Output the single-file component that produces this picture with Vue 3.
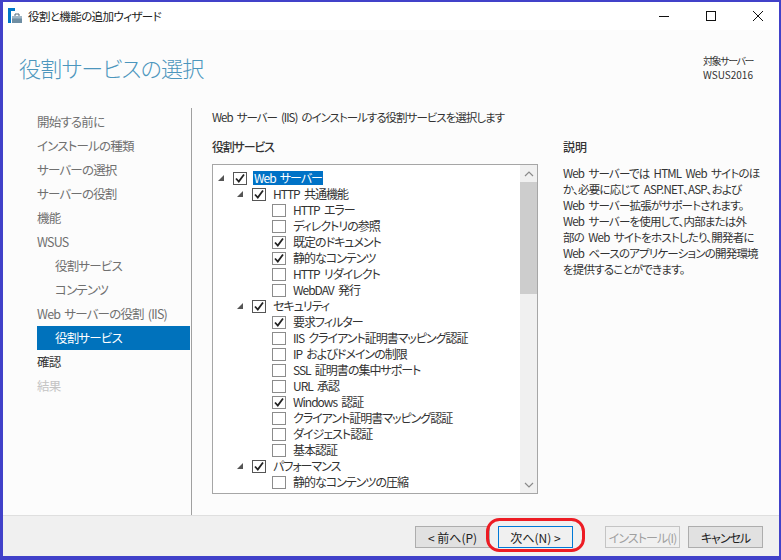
<script setup>
const nav = [
  { t: '開始する前に', c: 'gray' },
  { t: 'インストールの種類', c: 'gray' },
  { t: 'サーバーの選択', c: 'gray' },
  { t: 'サーバーの役割', c: 'gray' },
  { t: '機能', c: 'gray' },
  { t: 'WSUS', c: 'gray' },
  { t: '役割サービス', c: 'gray', sub: true },
  { t: 'コンテンツ', c: 'gray', sub: true },
  { t: 'Web サーバーの役割 (IIS)', c: 'gray' },
  { t: '役割サービス', c: 'sel', sub: true },
  { t: '確認', c: 'dark' },
  { t: '結果', c: 'off' }
]
const tree = [
  { t: 'Web サーバー', l: 0, ch: true, exp: true, sel: true },
  { t: 'HTTP 共通機能', l: 1, ch: true, exp: true },
  { t: 'HTTP エラー', l: 2 },
  { t: 'ディレクトリの参照', l: 2 },
  { t: '既定のドキュメント', l: 2, ch: true },
  { t: '静的なコンテンツ', l: 2, ch: true },
  { t: 'HTTP リダイレクト', l: 2 },
  { t: 'WebDAV 発行', l: 2 },
  { t: 'セキュリティ', l: 1, ch: true, exp: true },
  { t: '要求フィルター', l: 2, ch: true },
  { t: 'IIS クライアント証明書マッピング認証', l: 2 },
  { t: 'IP およびドメインの制限', l: 2 },
  { t: 'SSL 証明書の集中サポート', l: 2 },
  { t: 'URL 承認', l: 2 },
  { t: 'Windows 認証', l: 2, ch: true },
  { t: 'クライアント証明書マッピング認証', l: 2 },
  { t: 'ダイジェスト認証', l: 2 },
  { t: '基本認証', l: 2 },
  { t: 'パフォーマンス', l: 1, ch: true, exp: true },
  { t: '静的なコンテンツの圧縮', l: 2 }
]
const descLines = [
  'Web サーバーでは HTML Web サイトのほ',
  'か、必要に応じて ASP.NET、ASP、および',
  'Web サーバー拡張がサポートされます。',
  'Web サーバーを使用して、内部または外',
  '部の Web サイトをホストしたり、開発者に',
  'Web ベースのアプリケーションの開発環境',
  'を提供することができます。'
]
</script>

<template>
  <div class="win">
    <div class="titlebar">
      <svg class="appicon" width="16" height="16" viewBox="0 0 16 16">
        <rect x="0" y="0" width="7" height="3" fill="#0078c8" />
        <rect x="0" y="3" width="3" height="12" fill="#0078c8" />
        <path d="M4 8h10v7H4z" fill="#6f8ea3" />
        <path d="M4 8h10v2.5H4z" fill="#9fb6c6" />
        <path d="M7 8V6h4v2" fill="none" stroke="#51697a" stroke-width="1" />
      </svg>
      <span class="wintitle">役割と機能の追加ウィザード</span>
      <div class="controls">
        <svg width="12" height="12" viewBox="0 0 12 12"><path d="M1 6.5h10" stroke="#111" stroke-width="1" /></svg>
        <svg width="12" height="12" viewBox="0 0 12 12"><rect x="1.5" y="1.5" width="9" height="9" fill="none" stroke="#111" /></svg>
        <svg width="12" height="12" viewBox="0 0 12 12"><path d="M1 1l10 10M11 1L1 11" stroke="#111" stroke-width="1" /></svg>
      </div>
    </div>

    <div class="main">
      <header class="head">
        <h1>役割サービスの選択</h1>
        <div class="target">
          <div class="tight">対象サーバー</div>
          <div>WSUS2016</div>
        </div>
      </header>

      <div class="body">
        <nav class="nav">
          <div
            v-for="(n, i) in nav"
            :key="i"
            class="navitem"
            :class="[n.c, { sub: n.sub }]"
          >{{ n.t }}</div>
        </nav>

        <section class="content">
          <p class="lead">Web サーバー (IIS) のインストールする役割サービスを選択します</p>
          <div class="cols">
            <div class="left">
              <div class="label">役割サービス</div>
              <div class="treebox">
                <div class="rows">
                  <div
                    v-for="(r, i) in tree"
                    :key="i"
                    class="row"
                    :class="'lv' + r.l"
                  >
                    <span class="arrow" :class="{ hidden: !r.exp }"></span>
                    <span class="cb">
                      <svg v-if="r.ch" width="12" height="11" viewBox="0 0 12 11">
                        <path d="M2 5.5l2.8 3L10 1.5" fill="none" stroke="#222" stroke-width="1.8" />
                      </svg>
                    </span>
                    <span class="rowtext" :class="{ selected: r.sel }">{{ r.t }}</span>
                  </div>
                </div>
                <div class="scroll">
                  <div class="sbtn">
                    <svg width="10" height="6" viewBox="0 0 10 6"><path d="M1 5l4-4 4 4" fill="none" stroke="#8a8a8a" stroke-width="1.2" /></svg>
                  </div>
                  <div class="thumb"></div>
                  <div class="track"></div>
                  <div class="sbtn">
                    <svg width="10" height="6" viewBox="0 0 10 6"><path d="M1 1l4 4 4-4" fill="none" stroke="#8a8a8a" stroke-width="1.2" /></svg>
                  </div>
                </div>
              </div>
            </div>
            <aside class="desc">
              <div class="label short">説明</div>
              <div class="desctext">
                <div v-for="(line, i) in descLines" :key="i">{{ line }}</div>
              </div>
            </aside>
          </div>
        </section>
      </div>
    </div>

    <footer class="foot">
      <button class="btn first">&lt; 前へ(P)</button>
      <button class="btn next">次へ(N) &gt;
        <svg class="ring" width="99" height="34" viewBox="0 0 99 34">
          <rect x="1.5" y="1.5" width="96" height="31" rx="12" fill="none" stroke="#ed1c24" stroke-width="3" />
        </svg>
      </button>
      <button class="btn disabled install">インストール(I)</button>
      <button class="btn cancel">キャンセル</button>
    </footer>
  </div>
</template>

<style>
html, body { margin: 0; padding: 0; background: #fff; }
</style>

<style scoped>
.win {
  width: 781px;
  height: 560px;
  box-sizing: border-box;
  border: solid #4141c9;
  border-width: 2px 2px 4px 3px;
  display: flex;
  flex-direction: column;
  background: #fcfcfc;
  font-family: "Noto Sans CJK JP", "Noto Sans", sans-serif;
  font-feature-settings: "palt";
  font-size: 12px;
  color: #333;
  overflow: hidden;
}
.titlebar {
  height: 28px;
  flex: none;
  background: #fff;
  display: flex;
  align-items: center;
  padding-left: 5px;
  position: relative;
}
.appicon { margin-right: 4px; }
.wintitle { font-size: 11.5px; letter-spacing: -0.6px; color: #222; }
.controls {
  margin-left: auto;
  display: flex;
  gap: 35px;
  padding-right: 15px;
  align-items: center;
}
.main { flex: 1; display: flex; flex-direction: column; min-height: 0; }
.head {
  height: 78px;
  flex: none;
  display: flex;
  justify-content: space-between;
  box-sizing: border-box;
  padding: 0 26px 0 16px;
}
h1 {
  margin: 20px 0 0;
  font-size: 22px;
  letter-spacing: -0.8px;
  line-height: 34px;
  font-weight: 300;
  color: #4c96bd;
}
.target {
  margin-top: 24px;
  font-size: 10px;
  line-height: 14px;
  color: #333;
  text-align: left;
  width: 50px;
  white-space: nowrap;
}
.tight { letter-spacing: -1.4px; }
.body { flex: 1; display: flex; min-height: 0; }
.nav {
  width: 154px;
  margin-left: 34px;
  box-sizing: content-box;
  padding-top: 2px;
  margin-right: 0;
  border-right: 1px solid #a0a0a0;
  flex: none;
}
.navitem {
  height: 24px;
  line-height: 24px;
  font-size: 12.5px;
  letter-spacing: -0.8px;
  word-spacing: 2px;
  white-space: nowrap;
  margin-right: 1px;
}
.navitem.sub { padding-left: 18px; }
.gray { color: #707070; }
.sel { background: #0072bc; color: #fff; }
.dark { color: #333; }
.off { color: #c4c4c4; }
.content {
  flex: 1;
  padding-left: 20px;
  padding-right: 22px;
  min-width: 0;
}
.lead { margin: 0; line-height: 18px; font-size: 11.5px; letter-spacing: -1px; word-spacing: 2.5px; color: #333; }
.cols { display: flex; margin-top: 12px; }
.left { width: 326px; flex: none; }
.label { font-size: 12px; letter-spacing: -1.2px; line-height: 18px; color: #333; font-weight: 500; }
.label.short { letter-spacing: 0; }
.treebox {
  margin-top: 8px;
  height: 330px;
  box-sizing: border-box;
  border: 1px solid #a6a6a6;
  background: #fff;
  display: flex;
  overflow: hidden;
}
.rows { flex: 1; padding-top: 5px; overflow: hidden; }
.row {
  height: 16px;
  display: flex;
  align-items: center;
  white-space: nowrap;
  font-size: 12px;
  letter-spacing: -1px;
  word-spacing: 2.5px;
  color: #333;
}
.lv0 { padding-left: 5px; }
.lv1 { padding-left: 24px; }
.arrow {
  width: 0;
  height: 0;
  border-style: solid;
  border-width: 0 0 6px 6px;
  border-color: transparent transparent #555 transparent;
  margin-right: 9px;
  flex: none;
}
.arrow.hidden { visibility: hidden; }
.lv2 .arrow { display: none; }
.lv2 { padding-left: 59px; }
.cb {
  width: 12px;
  height: 11px;
  border: 1px solid #555;
  background: #fff;
  display: flex;
  flex: none;
  margin-right: 6px;
}
.lv2 .cb { border-color: #8c8c8c; }
.rowtext { padding: 0 1px; line-height: 14px; }
.selected { background: #0072c6; color: #fff; }
.scroll {
  width: 17px;
  flex: none;
  display: flex;
  flex-direction: column;
  background: #f0f0f0;
}
.sbtn {
  height: 17px;
  flex: none;
  display: flex;
  align-items: center;
  justify-content: center;
}
.thumb { height: 112px; background: #cdcdcd; flex: none; }
.track { flex: 1; }
.desc { margin-left: 25px; width: 205px; flex: none; }
.desctext {
  margin: 9px 0 0;
  font-size: 11.5px;
  letter-spacing: -0.8px;
  word-spacing: 2.5px;
  line-height: 16px;
  color: #333;
  white-space: nowrap;
}
.foot {
  height: 41px;
  flex: none;
  box-sizing: border-box;
  background: #f0f0f0;
  border-top: 1px solid #dfdfdf;
  display: flex;
  align-items: flex-start;
  padding: 10px 0 0 412px;
}
.btn {
  width: 75px;
  height: 22px;
  box-sizing: border-box;
  border: 1px solid #adadad;
  background: #e1e1e1;
  font: inherit;
  font-feature-settings: "palt";
  font-size: 12px;
  white-space: nowrap;
  color: #222;
  padding: 0;
  margin-right: 8px;
  position: relative;
}
.next {
  border-color: #0078d7;
  background: #f0f0f0;
  margin-right: 32px;
}
.install { letter-spacing: -0.9px; }
.cancel { letter-spacing: -1px; }
.disabled { color: #a0a0a0; background: #f0f0f0; border-color: #c4c4c4; }
.ring {
  position: absolute;
  left: -13px;
  top: -9px;
  pointer-events: none;
}
</style>
